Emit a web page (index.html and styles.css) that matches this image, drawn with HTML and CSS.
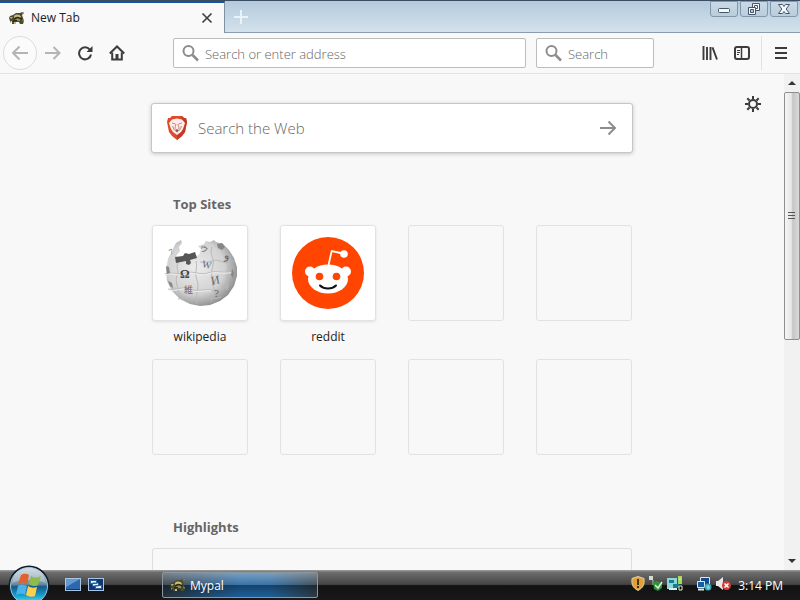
FILE: index.html
```html
<!DOCTYPE html>
<html lang="en">
<head>
    <meta charset="UTF-8">
    <meta name="viewport" content="width=device-width, initial-scale=1.0">
    <title>New Tab</title>
    <link rel="stylesheet" href="styles.css">
</head>
<body>
    <svg class="symbols" aria-hidden="true">
        <symbol id="turtle" viewBox="0 0 16 16">
            <path d="M1 6l3-1 3-2 4 0 2-1 2 1-2 2 1 3 1 3-1 3h-3l-1-2H6l-1 2H3l0-3-2 0-1-3z" fill="#4a4a2c"/>
            <path d="M5 6c2-2 6-2 7 1l-1 1c-2-2-4-1-6 0zM1 7l3 0-2 2zM5 12h2v2H5z" fill="#c9b878"/>
            <path d="M6 9l2-1 3 1 0 2H7z" fill="#8c8f55"/>
            <path d="M12 3l3-1-1 2zM1 11h2l-2 2zM13 9l2 2-1 1z" fill="#8d9b5b"/>
            <path d="M5 9l4-1.500L13 9M4 11l4-.5" stroke="#191a10" fill="none"/>
        </symbol>
        <symbol id="magnifier" viewBox="0 0 18 18">
            <circle cx="6.500" cy="7" r="5" fill="none" stroke="#8c8c8c" stroke-width="2"/>
            <path d="M10.500 11l5.500 5.500" stroke="#8c8c8c" stroke-width="2.500"/>
        </symbol>
    </svg>

    <div class="window">
        <header class="tab-bar">
            <div class="tab">
                <svg class="icon-16"><use href="#turtle"/></svg>
                <span class="tab-title">New Tab</span>
                <button class="plain" aria-label="Close tab">
                    <svg width="12" height="12" viewBox="0 0 12 12"><path d="M1.500 1.500l9 9M10.500 1.500l-9 9" stroke="#3c3c3c" stroke-width="1.600"/></svg>
                </button>
            </div>
            <button class="plain new-tab" aria-label="New tab">
                <svg width="16" height="16" viewBox="0 0 16 16"><path d="M8 1v14M1 8h14" stroke="#e9f4fa" stroke-width="2"/></svg>
            </button>
            <div class="window-buttons">
                <button aria-label="Minimize"><svg width="16" height="12" viewBox="0 0 16 12"><rect x="2.500" y="5.500" width="11" height="4" rx="1" fill="#f4f8fb" stroke="#47566b"/></svg></button>
                <button aria-label="Restore"><svg width="16" height="12" viewBox="0 0 16 12"><path d="M6.500.5h7v7h-7z" fill="#f4f8fb" stroke="#47566b"/><path d="M8.500 2.500h3v3h-3z" fill="none" stroke="#47566b"/><path d="M2.500 4.500h7v7h-7z" fill="#f4f8fb" stroke="#47566b"/><path d="M4.500 6.500h3v3h-3z" fill="#b9cbd9" stroke="#47566b"/></svg></button>
                <button aria-label="Close"><svg width="16" height="12" viewBox="0 0 16 12"><path d="M2.500 1.500h4L8 3.500l1.500-2h4L10.200 6l3.300 4.500h-4L8 8.500l-1.500 2h-4L5.800 6z" fill="#f4f8fb" stroke="#47566b"/></svg></button>
            </div>
        </header>

        <nav class="toolbar">
            <button class="plain back" aria-label="Back">
                <svg width="18" height="16" viewBox="0 0 18 16"><path d="M17 8H2M8.500 1.500L2 8l6.500 6.500" fill="none" stroke="#b4b4b4" stroke-width="2"/></svg>
            </button>
            <button class="plain tool" aria-label="Forward">
                <svg width="16" height="16" viewBox="0 0 16 16"><path d="M0 8h14M8.500 2l6 6-6 6" fill="none" stroke="#b4b4b4" stroke-width="2"/></svg>
            </button>
            <button class="plain tool" aria-label="Reload">
                <svg width="16" height="16" viewBox="0 0 16 16"><path d="M12.800 4.600A6 6 0 1 0 14 9.500" fill="none" stroke="#3c3c3c" stroke-width="2"/><path d="M15.500 1v6h-6z" fill="#3c3c3c"/></svg>
            </button>
            <button class="plain tool" aria-label="Home">
                <svg width="16" height="16" viewBox="0 0 16 16"><path d="M.8 8.500L8 1.500l7.200 7" fill="none" stroke="#3c3c3c" stroke-width="2"/><path d="M3.200 7.500v7h9.600v-7" fill="none" stroke="#3c3c3c" stroke-width="2"/><path d="M6.500 15V9h3v6z" fill="#3c3c3c"/></svg>
            </button>
            <label class="field address">
                <svg class="icon-18"><use href="#magnifier"/></svg>
                <input type="text" placeholder="Search or enter address" aria-label="Address">
            </label>
            <label class="field search">
                <svg class="icon-18"><use href="#magnifier"/></svg>
                <input type="text" placeholder="Search" aria-label="Search">
            </label>
            <div class="tool-group">
                <button class="plain tool" aria-label="Library">
                    <svg width="16" height="16" viewBox="0 0 16 16"><path d="M1.500 1v14M5 2v13M8.500 2v13M10.500 2.300L15 14.500" stroke="#3c3c3c" stroke-width="1.900" fill="none"/></svg>
                </button>
                <button class="plain tool" aria-label="Sidebar">
                    <svg width="16" height="16" viewBox="0 0 16 16"><rect x="1" y="2" width="14" height="12" rx="2" fill="none" stroke="#3c3c3c" stroke-width="2"/><path d="M7.500 2v12" stroke="#3c3c3c" stroke-width="1.500"/><path d="M3 5.500h3M3 7.500h3M3 9.500h2" stroke="#3c3c3c"/></svg>
                </button>
            </div>
            <button class="plain menu" aria-label="Menu">
                <svg width="14" height="14" viewBox="0 0 14 14"><path d="M1 2h12M1 7h12M1 12h12" stroke="#3c3c3c" stroke-width="2"/></svg>
            </button>
        </nav>

        <div class="viewport">
            <main class="page">
                <button class="plain settings" aria-label="Settings">
                    <svg width="16" height="16" viewBox="0 0 16 16" fill="none" stroke="#3c3c3c"><circle cx="8" cy="8" r="4" stroke-width="2"/><path d="M8 0v3M8 13v3M0 8h3M13 8h3M2.300 2.300l2.200 2.200M11.500 11.500l2.200 2.200M2.300 13.700l2.200-2.200M11.500 4.500l2.200-2.200" stroke-width="2"/></svg>
                </button>
                <div class="column">
                    <form class="web-search">
                        <svg width="22" height="26" viewBox="0 0 22 26">
                            <path d="M6 1h10l2 2 2 0 1 4-2 10-3 4-5 4-5-4-3-4L1 7l1-4h2z" fill="#dd4a2c"/>
                            <path d="M16 1l2 2 2 0 1 4-2 10-3 4-5 4v-5z" fill="#c43a28"/>
                            <path d="M6 4.500l5-1 5 1 3 3.500-2 6-2 3-4 3-4-3-2-3-2-6z" fill="#fdeee8"/>
                            <path d="M6 8l3.500 1M16 8l-3.500 1M10 9l-1.200 4.500L11 15l2.200-1.500L12 9M6.500 11l2 4.500M15.500 11l-2 4.500" fill="none" stroke="#c98a80"/>
                            <path d="M9 15.500l2-1 2 1-2 2z" fill="#8e5560"/>
                        </svg>
                        <input type="text" placeholder="Search the Web" aria-label="Search the Web">
                        <button class="plain" type="button" aria-label="Submit">
                            <svg width="18" height="16" viewBox="0 0 18 16"><path d="M1 8h15M9.500 1.500L16 8l-6.500 6.500" fill="none" stroke="#8c8c8c" stroke-width="2"/></svg>
                        </button>
                    </form>

                    <section class="top-sites">
                        <h2>Top Sites</h2>
                        <div class="sites">
                            <a class="site" href="#wikipedia">
                                <span class="tile filled">
                                    <svg width="76" height="76" viewBox="0 0 76 76">
                                        <defs>
                                            <radialGradient id="globe" cx=".42" cy=".42" r=".62">
                                                <stop offset="0" stop-color="#ececec"/>
                                                <stop offset=".65" stop-color="#d2d2d2"/>
                                                <stop offset="1" stop-color="#8a8a8a"/>
                                            </radialGradient>
                                        </defs>
                                        <path d="M14 8l5-3 1 3-3 4 1 4-4 5 3 3 10-1 10-3 2-6-3-3 6-2 2-3 4 1 4-2 2 2 7 2 6 6 5 8 3 9v9l-3 10-6 9-8 6-10 4-10 1-10-2-10-5-8-8-5-10-1-11 2-11 5-10z" fill="url(#globe)"/>
                                        <path d="M3 39c8-3 14 2 21-1s15 3 22 0 17 1 26-2M6 54c9 2 13-3 20 0s17 0 23 1 12-1 18-4M16 64c9-2 17 2 24 0s13 1 19-2M16 27c-3 8 2 8-1 14s3 14 2 20M34 26c2 7-2 11 1 19s-2 13 0 24M50 12c-3 8 3 11 1 18s-2 15 1 23-3 8-3 14M64 18c-2 7 4 12 2 19s0 13-1 18M38 27c9 2 14-4 20-1s8 0 14 0" fill="none" stroke="#b9b9b9"/>
                                        <path d="M3 40c8-3 14 2 21-1s15 3 22 0 17 1 26-2M6 55c9 2 13-3 20 0s17 0 23 1" fill="none" stroke="#efefef"/>
                                        <path d="M13 22l8-1 2-3 4 1 6-2 2 6-7 2 1 3-2 2-3-1 0-3-10 2z" fill="#565656"/>
                                        <path d="M55 9l5-1 3 4-3 3-4-2zM4 31l3 1 1 6-3 1zM6 46l4 2 1 5-3-2zM70 34l2 3-1 6-2-3z" fill="#868686"/>
                                        <g class="globe-glyphs">
                                            <text class="omega" x="18" y="43" font-size="12">Ω</text>
                                            <text x="40" y="33" font-size="10" transform="rotate(12 45 30)">W</text>
                                            <text x="49" y="49" font-size="12" transform="rotate(-10 54 45)">И</text>
                                            <text x="22" y="58" font-size="9">維</text>
                                            <text x="38" y="17" font-size="8" transform="rotate(20 42 14)">ウ</text>
                                            <text x="62" y="24" font-size="11">و</text>
                                            <text x="52" y="62" font-size="11">?</text>
                                            <text x="7" y="19" font-size="8" transform="rotate(-25 10 16)">7</text>
                                        </g>
                                    </svg>
                                </span>
                                <span class="site-name">wikipedia</span>
                            </a>
                            <a class="site" href="#reddit">
                                <span class="tile filled">
                                    <svg width="72" height="72" viewBox="0 0 72 72">
                                        <circle cx="36" cy="36" r="36" fill="#ff4500"/>
                                        <path d="M36.500 28l3.200-14L51 16.500" fill="none" stroke="#fff" stroke-width="1.800"/>
                                        <circle cx="52" cy="17" r="3.800" fill="#fff"/>
                                        <circle cx="18" cy="34.500" r="5" fill="#fff"/>
                                        <circle cx="54" cy="34.500" r="5" fill="#fff"/>
                                        <ellipse cx="36" cy="42" rx="20" ry="14.500" fill="#fff"/>
                                        <circle cx="27.500" cy="39.500" r="3.800" fill="#ff4500"/>
                                        <circle cx="44.500" cy="39.500" r="3.800" fill="#ff4500"/>
                                        <path d="M28 48.500c4 4 12 4 16 0" fill="none" stroke="#111" stroke-width="2" stroke-linecap="round"/>
                                    </svg>
                                </span>
                                <span class="site-name">reddit</span>
                            </a>
                            <div class="site"><span class="tile"></span></div>
                            <div class="site"><span class="tile"></span></div>
                            <div class="site"><span class="tile"></span></div>
                            <div class="site"><span class="tile"></span></div>
                            <div class="site"><span class="tile"></span></div>
                            <div class="site"><span class="tile"></span></div>
                        </div>
                    </section>

                    <section class="highlights">
                        <h2>Highlights</h2>
                        <div class="highlight-card"></div>
                    </section>
                </div>
            </main>

            <div class="scrollbar">
                <button class="plain" aria-label="Scroll up"><svg width="8" height="4" viewBox="0 0 8 4"><path d="M0 4l4-4 4 4z" fill="#333"/></svg></button>
                <div class="track">
                    <div class="thumb">
                        <svg width="8" height="8" viewBox="0 0 8 8"><path d="M0 .5h7M0 3.500h7M0 6.500h7" stroke="#555"/></svg>
                    </div>
                </div>
                <button class="plain" aria-label="Scroll down"><svg width="8" height="4" viewBox="0 0 8 4"><path d="M0 0l4 4 4-4z" fill="#333"/></svg></button>
            </div>
        </div>
    </div>

    <footer class="taskbar">
        <button class="plain start" aria-label="Start">
            <svg width="44" height="44" viewBox="0 0 44 44">
                <defs>
                    <linearGradient id="orb" x1="0" y1="0" x2="0" y2="1">
                        <stop offset="0" stop-color="#c3d0d8"/>
                        <stop offset=".45" stop-color="#6d8da2"/>
                        <stop offset=".52" stop-color="#14598b"/>
                        <stop offset=".75" stop-color="#149ecb"/>
                        <stop offset="1" stop-color="#5ff0fa"/>
                    </linearGradient>
                </defs>
                <circle cx="22" cy="22" r="20.500" fill="#0c1c29"/>
                <circle cx="22" cy="22" r="18.500" fill="url(#orb)" stroke="#a9c3d3"/>
                <path d="M5 19C8 4 17 4 22 4s14 1 17 15c-9-4-25-4-34 0z" fill="#fff" opacity=".3"/>
                <path d="M14 11c3-2 6-1 8 0l-2 9c-3-2-6-2-9 0z" fill="#e2622f"/>
                <path d="M24 12c3 2 6 2 10 0l-3 9c-3 2-6 1-9-1z" fill="#8cbd4a"/>
                <path d="M11 22c3-2 6-1 9 0l-2 9c-3-2-6-1-9 0z" fill="#4bb2e9"/>
                <path d="M21 22c3 2 6 2 9 1l-2 9c-3 1-6 1-9-1z" fill="#fdcf4c"/>
            </svg>
        </button>
        <div class="quick-launch">
            <button class="plain" aria-label="Show desktop">
                <svg width="16" height="14" viewBox="0 0 16 14"><rect x=".5" y=".5" width="15" height="12" fill="#2e67ae" stroke="#a8c5e3"/><path d="M1 1h14L1 9z" fill="#649ad0"/><path d="M1 11.500h14" stroke="#163766"/></svg>
            </button>
            <button class="plain" aria-label="Switch windows">
                <svg width="16" height="14" viewBox="0 0 16 14"><rect x=".5" y=".5" width="15" height="12" fill="#12376e" stroke="#a8c5e3"/><path d="M2.500 2.500h6v3h-6zM4.500 5h6v3h-6zM7.500 7.500h6v3h-6z" fill="#e8f4ff" stroke="#2864a5"/></svg>
            </button>
        </div>
        <button class="task">
            <svg class="icon-16"><use href="#turtle"/></svg>
            <span>Mypal</span>
        </button>
        <div class="tray">
            <svg width="14" height="16" viewBox="0 0 14 16"><path d="M7 .5l6 2c.5 6-.5 9-6 12C1.500 11.500.5 8.500 1 2.500z" fill="#dfa23a" stroke="#e8d4a1"/><path d="M7 3v6M7 10v2" stroke="#49310a" stroke-width="2"/></svg>
            <svg width="14" height="16" viewBox="0 0 14 16"><path d="M0 0h4v4H0z" fill="#d5dbd3"/><path d="M3 4h2v5H3z" fill="#7d8b7a"/><path d="M4 6l4-1 5 2v5l-4 3-4-2z" fill="#2f9138"/><path d="M6 9l3 3 4-6" fill="none" stroke="#d9f5d5" stroke-width="1.500"/></svg>
            <svg class="tray-gap" width="16" height="16" viewBox="0 0 16 16"><path d="M0 2h10v11H0z" fill="#8fd4d9"/><path d="M2 4h5v3H2zM6 8h6v4H6z" fill="#167c91"/><path d="M2 12h8v2H2z" fill="#d9f0ef"/><path d="M11 0h4v8h-4z" fill="#a5d95e"/><path d="M12 3h2M12 10h3v4h-3z" stroke="#e5f3c5"/></svg>
            <svg width="16" height="16" viewBox="0 0 16 16"><path d="M4.500 1.500h9v8h-9z" fill="#164a88" stroke="#d5ebf9"/><path d="M1.500 5.500h7v6h-7z" fill="#165c9f" stroke="#d5ebf9"/><path d="M2 13.500h6" stroke="#d5ebf9" stroke-width="2"/><circle cx="12" cy="11" r="3.500" fill="#2ba4bd"/><path d="M10 10l3-1 1 3-2 2z" fill="#82d6cd"/></svg>
            <svg width="16" height="16" viewBox="0 0 16 16"><path d="M0 5h2l5-4v13l-5-4H0z" fill="#e8e8e8"/><circle cx="10.500" cy="9.500" r="4.500" fill="#d43b3b"/><path d="M8.500 7.500l4 4M12.500 7.500l-4 4" stroke="#fff" stroke-width="1.500"/></svg>
            <time class="clock">3:14 PM</time>
        </div>
    </footer>
</body>
</html>
```
FILE: styles.css
```css
* {
    box-sizing: border-box;
}
body {
    display: flex;
    flex-direction: column;
    height: 100vh;
    margin: 0;
    overflow: hidden;
    background: #f8f8f8;
    color: #222;
    font-family: "Open Sans", "Noto Sans", sans-serif;
    font-size: 12px;
}
button, input {
    font: inherit;
    color: inherit;
}
svg {
    display: block;
    flex: none;
}
.symbols {
    position: absolute;
    width: 0;
    height: 0;
}
.icon-16 {
    width: 16px;
    height: 16px;
}
.icon-18 {
    width: 18px;
    height: 18px;
}
.plain {
    display: flex;
    align-items: center;
    justify-content: center;
    padding: 0;
    border: none;
    background: none;
}
.window {
    display: flex;
    flex-direction: column;
    flex: 1;
    min-height: 0;
}

/* Tabs and window buttons */
.tab-bar {
    display: flex;
    height: 33px;
    background: linear-gradient(#b3cadd, #d5e3ec);
    border-top: 1px solid #3c4d63;
}
.tab {
    display: flex;
    align-items: center;
    gap: 6px;
    width: 225px;
    padding: 0 11px 1px 9px;
    background: #f9f9f9;
    border-top: 2px solid #1455a4;
    border-right: 1px solid #7e92a4;
}
.tab-title {
    flex: 1;
}
.new-tab {
    width: 32px;
    border-bottom: 1px solid #8b9dac;
}
.window-buttons {
    display: flex;
    flex: 1;
    justify-content: flex-end;
    align-items: flex-start;
    gap: 2px;
    padding-right: 2px;
    border-bottom: 1px solid #8b9dac;
}
.window-buttons button {
    display: flex;
    align-items: center;
    justify-content: center;
    width: 28px;
    height: 16px;
    padding: 0;
    background: linear-gradient(#c9dae7, #bacddb);
    border: 1px solid #8397aa;
    border-radius: 0 0 3px 3px;
}

/* Toolbar */
.toolbar {
    display: flex;
    align-items: center;
    height: 41px;
    padding-left: 3px;
    background: #f9f9f9;
    border-bottom: 1px solid #e2e2e2;
}
.back {
    width: 34px;
    height: 34px;
    border: 1px solid #dcdcdc;
    border-radius: 50%;
    background: #fbfbfb;
}
.tool {
    width: 32px;
    height: 32px;
}
.field {
    display: flex;
    align-items: center;
    gap: 5px;
    height: 30px;
    padding-left: 8px;
    background: #fff;
    border: 1px solid #bdbdbd;
    border-radius: 2px;
}
.field input {
    flex: 1;
    min-width: 0;
    padding: 1px 0 0;
    border: none;
    outline: none;
    background: none;
    font-size: 13px;
    font-weight: 300;
}
input::placeholder {
    color: #666;
    opacity: 1;
}
.address {
    flex: 1;
    margin-left: 40px;
}
.search {
    width: 118px;
    margin-left: 10px;
}
.tool-group {
    display: flex;
    margin-left: 40px;
    padding-right: 3px;
}
.menu {
    width: 39px;
    height: 34px;
    border-left: 1px solid #e2e2e2;
}

/* New tab page */
.viewport {
    display: flex;
    flex: 1;
    min-height: 0;
}
.page {
    position: relative;
    flex: 1;
    overflow: hidden;
}
.settings {
    position: absolute;
    top: 22px;
    right: 23px;
}
.column {
    max-width: 482px;
    margin: 0 auto;
    padding-top: 29px;
}
.web-search {
    display: flex;
    align-items: center;
    gap: 10px;
    height: 50px;
    padding: 0 15px 0 14px;
    background: #fff;
    border: 1px solid #c6c6c6;
    border-radius: 3px;
    box-shadow: 0 1px 4px rgba(0, 0, 0, 0.2);
}
.web-search input {
    flex: 1;
    min-width: 0;
    padding: 0;
    border: none;
    outline: none;
    background: none;
    font-size: 15px;
    font-weight: 300;
}
h2 {
    margin: 0 0 11px;
    padding-left: 22px;
    color: #666;
    font-size: 13px;
    font-weight: 700;
    line-height: 20px;
}
.top-sites {
    margin-top: 41px;
}
.sites {
    display: grid;
    grid-template-columns: repeat(4, 96px);
    grid-auto-rows: 102px;
    justify-content: center;
    gap: 32px;
}
.site {
    color: #222;
    text-align: center;
    text-decoration: none;
}
.tile {
    display: flex;
    align-items: center;
    justify-content: center;
    height: 96px;
    border: 1px solid #e2e2e2;
    border-radius: 3px;
}
.filled {
    background: #fff;
    box-shadow: 0 1px 3px rgba(0, 0, 0, 0.1);
}
.site-name {
    display: block;
    padding-top: 6px;
    line-height: 20px;
}
.globe-glyphs {
    fill: #666;
    font-family: "Liberation Serif", "DejaVu Serif", "Noto Sans CJK JP", serif;
}
.omega {
    fill: #444;
    font-weight: 700;
}
.highlights {
    margin-top: 56px;
}
.highlight-card {
    height: 120px;
    margin: 0 1px;
    border: 1px solid #dedede;
    border-radius: 3px;
}

/* Scrollbar */
.scrollbar {
    display: flex;
    flex-direction: column;
    width: 16px;
    background: #f1f1f1;
}
.scrollbar button {
    height: 18px;
}
.track {
    flex: 1;
}
.thumb {
    display: flex;
    align-items: center;
    justify-content: center;
    height: 54%;
    background: linear-gradient(to right, #f5f5f5 0%, #e6e6e6 45%, #c6c6c6 55%, #d9d9d9 100%);
    border: 1px solid #8f8f8f;
    border-radius: 2px;
}

/* Taskbar */
.taskbar {
    display: flex;
    align-items: center;
    height: 30px;
    padding-left: 7px;
    background: linear-gradient(#a0a0a0 0%, #6c6c6c 8%, #444 48%, #121212 52%, #191919 100%);
    color: #fff;
}
.start {
    position: relative;
    height: 36px;
    align-self: flex-end;
    align-items: flex-start;
}
.quick-launch {
    display: flex;
    gap: 7px;
    margin-left: 14px;
}
.task {
    display: flex;
    align-items: center;
    gap: 4px;
    width: 156px;
    height: 26px;
    margin-left: 58px;
    padding: 0 7px;
    background:
        linear-gradient(rgba(255, 255, 255, 0.4), rgba(255, 255, 255, 0.12) 50%, rgba(0, 0, 0, 0.3) 51%, rgba(0, 0, 0, 0)),
        linear-gradient(to right, #26323c, #1d5f9c 50%, #1f5f97 70%, #2c3a45);
    border: 1px solid #8a979f;
    border-radius: 2px;
}
.tray {
    display: flex;
    align-items: center;
    gap: 4px;
    margin-left: auto;
    padding-right: 17px;
}
.tray svg {
    margin-bottom: 2px;
}
.tray .tray-gap {
    margin-right: 9px;
}
.clock {
    margin-left: 2px;
}
```
